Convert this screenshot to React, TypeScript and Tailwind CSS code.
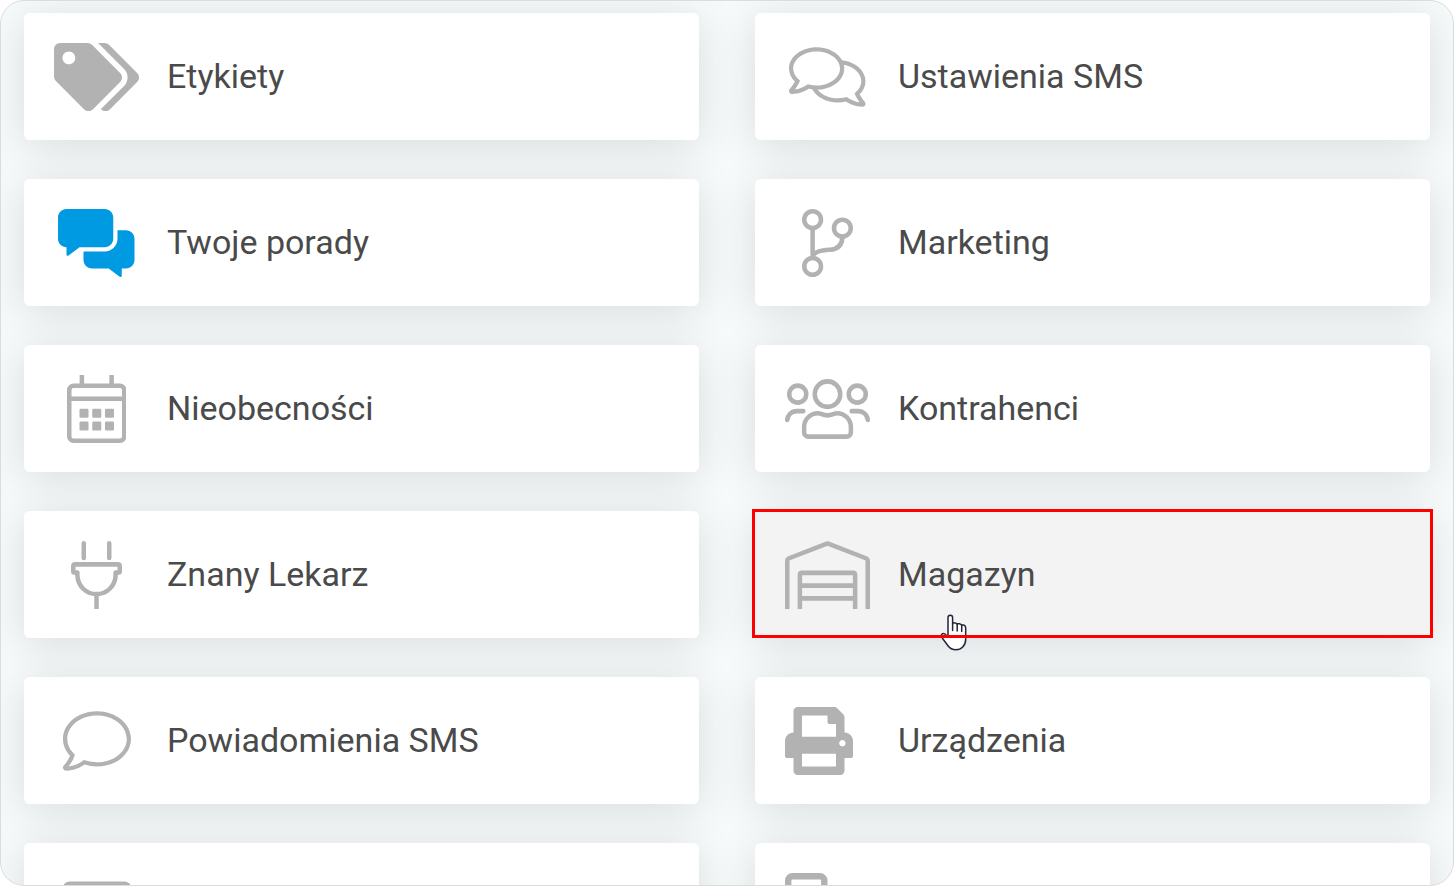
import type { ReactNode } from "react";
import { FaPrint, FaTags } from "react-icons/fa";

type Tile = {
  label: string;
  href: string;
  icon: ReactNode;
  iconStart?: boolean;
  labelHidden?: boolean;
  active?: boolean;
};

// Line icons share a 512 unit high grid with a 34 unit stroke.
function LineIcon({ width, children }: { width: number; children: ReactNode }) {
  return (
    <svg
      viewBox={`0 0 ${width} 512`}
      className="h-[68px] w-auto"
      fill="none"
      stroke="currentColor"
      strokeWidth={34}
      strokeLinejoin="round"
      aria-hidden="true"
    >
      {children}
    </svg>
  );
}

function SolidIcon({ width, children }: { width: number; children: ReactNode }) {
  return (
    <svg
      viewBox={`0 0 ${width} 512`}
      className="h-[68px] w-auto"
      fill="currentColor"
      aria-hidden="true"
    >
      {children}
    </svg>
  );
}

function CommentsIcon() {
  return (
    <SolidIcon width={576}>
      <path d="M569.9 441.1c-.5-.4-22.6-24.2-37.9-54.9 27.5-27.1 44-61.1 44-98.2 0-80-76.5-146.1-176.2-157.9C368.4 72.5 294.3 32 208 32 93.1 32 0 103.6 0 192c0 37 16.5 71 44 98.2-15.3 30.7-37.3 54.5-37.7 54.9-6.3 6.7-8.1 16.5-4.4 25 3.6 8.5 12 14 21.2 14 53.5 0 96.7-20.2 125.2-38.8 9.1 2.1 18.4 3.7 28 4.8 31.5 57.5 105.5 98 191.8 98 20.8 0 40.8-2.4 59.8-6.8 28.5 18.5 71.6 38.8 125.2 38.8 9.2 0 17.5-5.5 21.2-14 3.6-8.5 1.9-18.3-4.4-25zM155.4 314l-13.2-3-11.4 7.4c-20.1 13.1-50.5 28.2-87.7 32.5 8.8-11.3 20.2-27.6 29.5-46.4L83 283.7l-16.5-16.3C50.7 251.9 32 226.2 32 192c0-70.6 79-128 176-128s176 57.4 176 128-79 128-176 128c-17.7 0-35.4-2-52.6-6zm289.8 100.4l-11.4-7.4-13.2 3.1c-17.2 4-34.9 6-52.6 6-65.1 0-122-25.9-152.4-64.3C326.9 348.6 416 278.4 416 192c0-9.5-1.3-18.7-3.3-27.7C488.1 178.8 544 228.7 544 288c0 34.2-18.7 59.9-34.5 75.4L493 379.7l10.3 20.7c9.4 18.9 20.8 35.2 29.5 46.4-37.1-4.2-67.5-19.4-87.6-32.4z" />
    </SolidIcon>
  );
}

function CommentIcon() {
  return (
    <SolidIcon width={512}>
      <path d="M256 64c123.5 0 224 79 224 176S379.5 416 256 416c-28.3 0-56.3-4.3-83.2-12.8l-15.2-4.8-13 9.2c-23 16.3-58.5 35.3-102.6 39.6 12-15.1 29.8-40.4 40.8-69.6l7.1-18.7-13.7-14.6C47.3 313.7 32 277.6 32 240c0-97 100.5-176 224-176m0-32C114.6 32 0 125.1 0 240c0 47.6 19.9 91.2 52.9 126.3C38 405.7 7 439.1 6.5 439.5c-6.6 7-8.4 17.2-4.6 26 3.8 8.8 12.4 14.5 22 14.5 61.5 0 110-25.7 139.1-46.3 29 9.1 60.2 14.3 93 14.3 141.4 0 256-93.1 256-208S397.4 32 256 32z" />
    </SolidIcon>
  );
}

function AdviceIcon() {
  return (
    <SolidIcon width={576}>
      <path
        className="text-[#009ae2]"
        fill="currentColor"
        d="M416 192V64c0-35.3-28.7-64-64-64H64C28.7 0 0 28.7 0 64v160c0 35.3 28.7 64 64 64v54.2c0 8 9.1 12.6 15.5 7.8l82.8-62.1H352c35.3.1 64-28.6 64-63.9zm96-32h-64v64c0 52.9-43.1 96-96 96H192v64c0 35.3 28.7 64 64 64h125.7l82.8 62.1c6.4 4.8 15.5.2 15.5-7.8V448h32c35.3 0 64-28.7 64-64V224c0-35.3-28.7-64-64-64z"
      />
    </SolidIcon>
  );
}

function BranchIcon() {
  return (
    <LineIcon width={384}>
      <circle cx="80" cy="80" r="63" />
      <circle cx="304" cy="144" r="63" />
      <circle cx="80" cy="432" r="63" />
      <path d="M80 144v224M304 208c0 64-34 94-96 99-68 5-106 10-128 47" />
    </LineIcon>
  );
}

function CalendarIcon() {
  return (
    <LineIcon width={448}>
      <rect x="17" y="81" width="414" height="414" rx="32" />
      <path d="M112 0v72M336 0v72M16 178h416" />
      <g fill="currentColor" stroke="none">
        <rect x="94" y="254" width="68" height="68" rx="10" />
        <rect x="190" y="254" width="68" height="68" rx="10" />
        <rect x="286" y="254" width="68" height="68" rx="10" />
        <rect x="94" y="350" width="68" height="68" rx="10" />
        <rect x="190" y="350" width="68" height="68" rx="10" />
        <rect x="286" y="350" width="68" height="68" rx="10" />
      </g>
    </LineIcon>
  );
}

function PeopleIcon() {
  return (
    <LineIcon width={640}>
      <circle cx="96" cy="144" r="64" />
      <circle cx="544" cy="144" r="64" />
      <circle cx="320" cy="144" r="96" />
      <path
        strokeLinecap="round"
        d="M138 272H88a71 71 0 0 0-71 66M502 272h50a71 71 0 0 1 71 66"
      />
      <path d="M176 464a32 32 0 0 1-32-32v-40c0-58 46-104 104-104 24 0 36 16 72 16s48-16 72-16c58 0 104 46 104 104v40a32 32 0 0 1-32 32z" />
    </LineIcon>
  );
}

function PlugIcon() {
  return (
    <LineIcon width={384}>
      <path strokeLinecap="round" d="M96 17v111M288 17v111" />
      <path d="M32 176h320q15 0 15 16v38q0 8-8 8h-23v18a144 144 0 0 1-288 0v-18H25q-8 0-8-8v-38q0-16 15-16zM192 400v112" />
    </LineIcon>
  );
}

function WarehouseIcon() {
  return (
    <LineIcon width={640}>
      <path d="M17 512V152q0-16 14-22L320 18l289 112q14 6 14 22v360" />
      <path d="M112 512V256q0-16 16-16h384q16 0 16 16v256M112 336h416M112 432h416" />
    </LineIcon>
  );
}

function CardIcon() {
  return (
    <SolidIcon width={512}>
      <rect x="0" y="64" width="512" height="384" rx="48" />
    </SolidIcon>
  );
}

function PhoneIcon() {
  return (
    <LineIcon width={320}>
      <rect x="24" y="24" width="272" height="464" rx="32" strokeWidth={48} />
    </LineIcon>
  );
}

function HandCursor() {
  return (
    <svg
      viewBox="0 0 28 38"
      className="absolute top-[103px] left-[185px] h-[38px] w-7"
      fill="#fff"
      stroke="#25253a"
      strokeWidth="1.5"
      strokeLinejoin="round"
      strokeLinecap="round"
      aria-hidden="true"
    >
      <path d="M8 23V3.5q0-2.3 2.3-2.3t2.3 2.3V10q0-1.4 2.4-1.1 2.2.3 2.2 1.7 0-1.2 2.3-.8 2.2.4 2.2 1.9 0-1.1 2-.7 2 .5 2 2.8V25q0 5-3 8-2.6 2.8-6.7 2.8-5.2 0-8.2-4.3L2.6 24.5Q.6 21 2 20q2-1.3 4.3 1.3z" />
      <path fill="none" d="M12.6 10v6.5M17.2 10.6v6.4M21.7 12v5.5" />
    </svg>
  );
}

const tiles: Tile[] = [
  {
    label: "Etykiety",
    href: "#etykiety",
    icon: <FaTags className="h-[68px] w-[85px]" aria-hidden="true" />,
  },
  { label: "Ustawienia SMS", href: "#ustawienia-sms", icon: <CommentsIcon /> },
  { label: "Twoje porady", href: "#porady", icon: <AdviceIcon /> },
  { label: "Marketing", href: "#marketing", icon: <BranchIcon /> },
  { label: "Nieobecności", href: "#nieobecnosci", icon: <CalendarIcon /> },
  { label: "Kontrahenci", href: "#kontrahenci", icon: <PeopleIcon /> },
  { label: "Znany Lekarz", href: "#znany-lekarz", icon: <PlugIcon /> },
  { label: "Magazyn", href: "#magazyn", icon: <WarehouseIcon />, active: true },
  { label: "Powiadomienia SMS", href: "#powiadomienia-sms", icon: <CommentIcon /> },
  {
    label: "Urządzenia",
    href: "#urzadzenia",
    icon: <FaPrint className="size-[68px]" aria-hidden="true" />,
    iconStart: true,
  },
  { label: "Karty", href: "#karty", icon: <CardIcon />, labelHidden: true },
  {
    label: "Telefon",
    href: "#telefon",
    icon: <PhoneIcon />,
    iconStart: true,
    labelHidden: true,
  },
];

function SettingsTile({ tile }: { tile: Tile }) {
  return (
    <li className="relative rounded-md shadow-[0_6px_44px_rgba(0,0,0,0.12)]">
      {/* The link sits above the shadows of the neighbouring tiles. */}
      <a
        href={tile.href}
        aria-label={tile.labelHidden ? tile.label : undefined}
        className={`relative z-10 flex h-[127px] items-center gap-7 rounded-md px-[30px] text-[#4a4a4a] ${
          tile.active ? "bg-[#f3f3f3]" : "bg-white hover:bg-[#f3f3f3]"
        }`}
      >
        <span
          className={`flex w-[85px] shrink-0 text-[#b2b2b2] ${
            tile.iconStart ? "justify-start" : "justify-center"
          }`}
        >
          {tile.icon}
        </span>
        {!tile.labelHidden && (
          <span className="pb-0.5 text-[34px] leading-10">{tile.label}</span>
        )}
      </a>

      {tile.active && (
        <div className="pointer-events-none absolute inset-0 z-20">
          <HandCursor />
          <div className="absolute -inset-x-[3px] -top-0.5 bottom-0 border-[3px] border-[#ff0000]" />
        </div>
      )}
    </li>
  );
}

export default function App() {
  return (
    <main className="h-screen overflow-hidden rounded-3xl border border-[#dcdcdc] bg-[#f6fafb] font-['Roboto',sans-serif]">
      <ul className="grid grid-cols-2 gap-x-14 gap-y-[39px] px-[23px] py-3">
        {tiles.map((tile) => (
          <SettingsTile key={tile.href} tile={tile} />
        ))}
      </ul>
    </main>
  );
}
